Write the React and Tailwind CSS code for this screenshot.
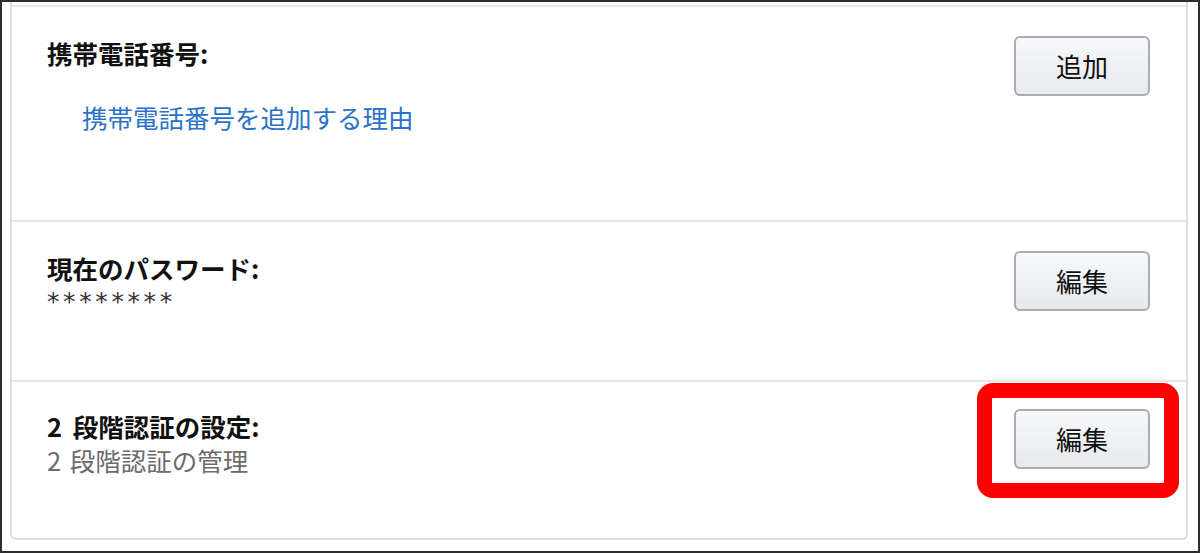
import React from "react";

function Btn({ children }) {
  return (
    <button className="w-[136px] h-[60px] shrink-0 rounded-[6px] border-2 border-[#a9adb3] bg-linear-to-b from-[#f7f8fa] to-[#e7e9ec] text-[26px] leading-none text-[#111] shadow-[inset_0_1px_0_rgba(255,255,255,0.6)]">
      {children}
    </button>
  );
}

export default function App() {
  return (
    <div
      className="relative w-[1200px] h-[553px] border-2 border-[#2d2d2d] bg-white flex flex-col"
      style={{ fontFamily: '"Noto Sans CJK JP", "Noto Sans", sans-serif' }}
    >
      <div className="ml-[8px] mr-[10px] mb-[11px] flex-1 flex flex-col border-2 border-t-0 border-[#dddddd] rounded-b-[6px] pt-[3px]">
        <div className="h-[215px] border-t-2 border-[#e7e7e7] flex justify-between pl-[35px] pr-[36px] pt-[29px]">
          <div className="flex flex-col">
            <div className="text-[25.5px] leading-[34px] font-bold text-[#111]">携帯電話番号:</div>
            <a className="mt-[30px] ml-[35px] text-[25.5px] leading-[34px] text-[#2a72c8]">携帯電話番号を追加する理由</a>
          </div>
          <Btn>追加</Btn>
        </div>
        <div className="h-[160px] border-t-2 border-[#e7e7e7] flex justify-between pl-[35px] pr-[36px] pt-[29px]">
          <div className="flex flex-col">
            <div className="text-[25.5px] leading-[34px] font-bold text-[#111]">現在のパスワード:</div>
            <div
              className="text-[25px] leading-[34px] text-[#333] tracking-[3.6px]"
              style={{ fontFamily: '"DejaVu Sans", sans-serif' }}
            >
              ********
            </div>
          </div>
          <Btn>編集</Btn>
        </div>
        <div className="flex-1 border-t-2 border-[#e7e7e7] flex justify-between pl-[35px] pr-[36px] pt-[27px]">
          <div className="flex flex-col">
            <div className="text-[25.5px] leading-[34px] font-bold text-[#111] [word-spacing:5px]">2 段階認証の設定:</div>
            <div className="text-[25.5px] leading-[34px] text-[#6b6b6b] [word-spacing:3px]">2 段階認証の管理</div>
          </div>
          <Btn>編集</Btn>
        </div>
      </div>
      <div className="absolute left-[975px] top-[381px] w-[202px] h-[115px] border-[15px] border-[#ff0000] rounded-[16px]"></div>
    </div>
  );
}
